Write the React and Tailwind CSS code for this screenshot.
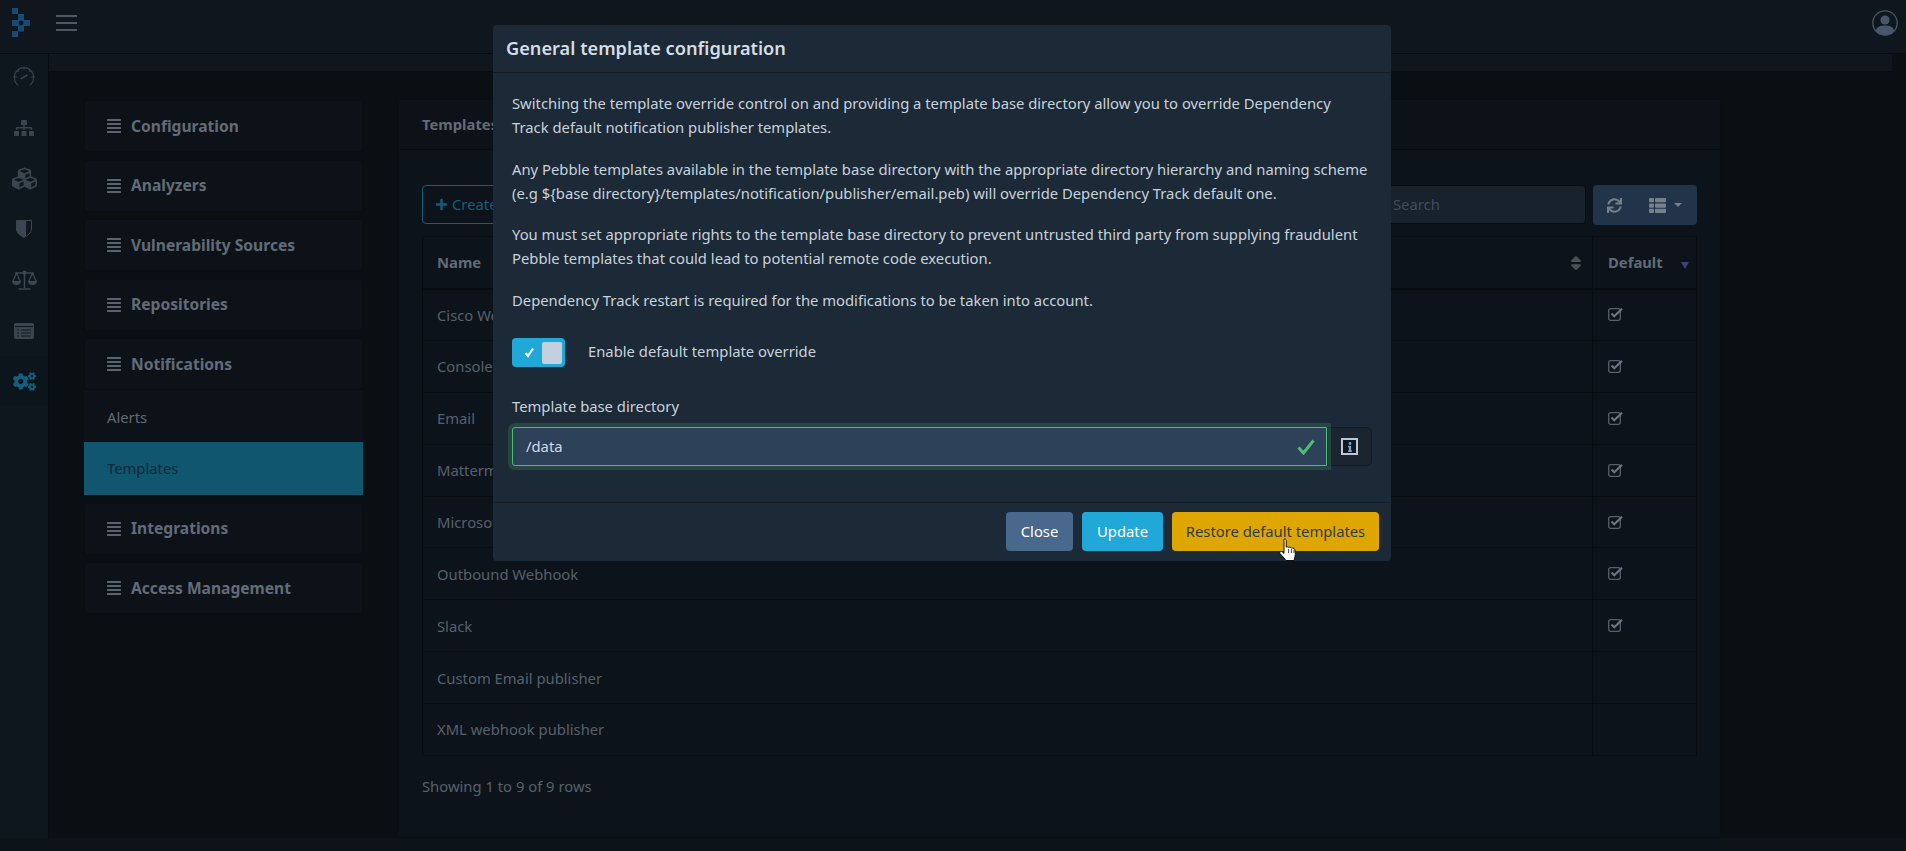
import { FaAlignJustify, FaCogs, FaCubes, FaPlus, FaSitemap, FaSort, FaSync, FaThList, FaInfo } from 'react-icons/fa';

const sideGroupsTop = ['Configuration', 'Analyzers', 'Vulnerability Sources', 'Repositories'];
const sideGroupsBottom = ['Integrations', 'Access Management'];
const templates = [
  ['Cisco WebEx', true],
  ['Console', true],
  ['Email', true],
  ['Mattermost', true],
  ['Microsoft Teams', true],
  ['Outbound Webhook', true],
  ['Slack', true],
  ['Custom Email publisher', false],
  ['XML webhook publisher', false],
];

function Logo() {
  return (
    <svg width="18" height="29" viewBox="0 0 18 29" fill="#174a75" className="block">
      <rect x="0" y="0" width="6" height="6" />
      <rect x="6" y="6" width="6" height="6" />
      <rect x="0" y="12" width="18" height="6" />
      <circle cx="9" cy="15" r="2.4" fill="#0f161d" />
      <rect x="6" y="18" width="6" height="5.5" />
      <rect x="0" y="23" width="6" height="6" />
    </svg>
  );
}

function Gauge() {
  return (
    <svg width="22" height="22" viewBox="0 0 22 22" fill="none" stroke="#36424e" strokeWidth="1.2">
      <path d="M5 19.2A9.8 9.8 0 1 1 17 19.2" />
      <path d="M7.5 13 L14.5 9" strokeWidth="1.6" />
      <path d="M11 1.5v2M2 11h2M18 11h2M4.5 4.5l1.4 1.4M17.5 4.5l-1.4 1.4" />
    </svg>
  );
}

function Shield() {
  return (
    <svg width="16" height="18" viewBox="0 0 16 18">
      <path d="M0.5 0.5H15.5V9C15.5 13 11 16 8 17.5C5 16 0.5 13 0.5 9Z" fill="#10171e" stroke="#3d4753" />
      <path d="M0.5 0.5H10V15.8C9.3 16.3 8.6 17.2 8 17.5C5 16 0.5 13 0.5 9Z" fill="#3d4753" />
    </svg>
  );
}

function ScaleIcon() {
  return (
    <svg width="25" height="20" viewBox="0 0 25 20" fill="none" stroke="#3d4753" strokeWidth="1.2">
      <path d="M12.5 1v17M6.5 19h12M3 3h19" strokeWidth="1.5" />
      <circle cx="12.5" cy="2.5" r="1.5" fill="#3d4753" />
      <path d="M4.5 3 .8 11.5h7.4ZM20.5 3l-3.7 8.5h7.4Z" />
      <path d="M.8 11.5a3.7 2.8 0 0 0 7.4 0ZM16.8 11.5a3.7 2.8 0 0 0 7.4 0Z" fill="#3d4753" />
    </svg>
  );
}

function ListIcon() {
  return (
    <svg width="20" height="16" viewBox="0 0 20 16">
      <rect x="0" y="0" width="20" height="16" rx="2" fill="#3a4550" />
      <path d="M1 3.5h18M3 7h2M7 7h10M3 10h2M7 10h10M3 13h2M7 13h10" stroke="#10171e" strokeWidth="1" />
    </svg>
  );
}

function Avatar() {
  return (
    <svg width="26" height="26" viewBox="0 0 26 26">
      <circle cx="13" cy="13" r="12.2" fill="none" stroke="#48586a" strokeWidth="1.3" />
      <circle cx="13" cy="10" r="4.6" fill="#48586a" />
      <path d="M3.6 20.5C5 16.8 8.5 15.6 13 15.6S21 16.8 22.4 20.5A11.3 11.3 0 0 1 13 25 11.3 11.3 0 0 1 3.6 20.5Z" fill="#48586a" />
    </svg>
  );
}

function CheckSquare() {
  return (
    <svg width="16" height="14" viewBox="0 0 16 14" fill="none" className="block -mt-[1px]">
      <rect x="0.7" y="1.7" width="11.6" height="11.6" rx="2" stroke="#55616d" strokeWidth="1.3" />
      <path d="M3.5 6.5 6.3 9.3 14 1.8" stroke="#6b7682" strokeWidth="2.2" />
    </svg>
  );
}

function HandCursor() {
  return (
    <svg width="18" height="24" viewBox="0 0 18 24" className="absolute left-[1279px] top-[538px]">
      <path
        d="M5 1.2C6 .6 7.2 1.2 7.2 2.4V9.2C7.8 8.6 9.3 8.6 9.9 9.6C10.6 9 12 9.1 12.6 10.2C13.4 9.7 15 10 15.6 11.2C16.4 13 16.5 16 16 18.5L15 22.5H6.8L5.6 20.6L1.2 15.8C.5 15 .7 13.9 1.6 13.6C2.6 13.2 3.6 14 5 15.4V2.4C5 2 5 1.5 5 1.2Z"
        fill="#ffffff"
        stroke="#111111"
        strokeWidth="1"
      />
      <path d="M9.6 11V15M12.4 11V15M15 12V15" stroke="#111111" strokeWidth="0.8" />
    </svg>
  );
}

function SideHeading({ label, mb }) {
  return (
    <div className={`h-[52px] flex items-center pl-[21px] bg-[#0d1219] border border-[#0a0d12] rounded-[3px] ${mb}`}>
      <FaAlignJustify className="w-[16px] h-[16px] text-[#59646f]" />
      <span className="ml-[9px] pt-[1px] font-bold text-[#616c78] text-[15.6px]">{label}</span>
    </div>
  );
}

function TemplatesTable() {
  return (
    <table className="w-full table-fixed border-collapse text-[14.8px] text-[#56616c]">
      <thead>
        <tr className="h-[52px] border border-[#080b0f] border-b-2 text-[#616c78]">
          <th className="text-left font-bold px-[14px] relative">
            Name
            <FaSort className="absolute right-[9px] top-[17px] w-[14px] h-[18px] text-[#4a5157]" />
          </th>
          <th className="w-[104px] text-left font-bold pl-[15px] border-l border-[#080b0f] relative">
            Default
            <span className="absolute right-[7px] top-[25px] w-0 h-0 border-x-[4.5px] border-x-transparent border-t-[7px] border-t-[#3f3f80]" />
          </th>
        </tr>
      </thead>
      <tbody>
        {templates.map(([name, isDefault]) => (
          <tr key={name} className="h-[51.9px] border border-[#080b0f]">
            <td className="px-[14px]">{name}</td>
            <td className="pl-[15px] border-l border-[#080b0f]">{isDefault && <CheckSquare />}</td>
          </tr>
        ))}
      </tbody>
    </table>
  );
}

function TemplateModal() {
  return (
    <div className="absolute left-[493px] top-[25px] w-[898px] h-[536px] bg-[#1c2936] rounded-[4px] text-[#c8d2dc] text-[14.8px] flex flex-col">
      <div className="h-[48px] pl-[13px] flex items-center border-b border-[#141b24]">
        <h5 className="font-semibold text-[18.2px] text-[#d5dde5]">General template configuration</h5>
      </div>
      <div className="flex-1 pt-[18px] px-[19px]">
        <p className="leading-[24px] mb-[17.5px] max-w-[840px]">
          Switching the template override control on and providing a template base directory allow you to override Dependency Track default notification publisher templates.
        </p>
        <p className="leading-[24px] mb-[17.5px]">
          Any Pebble templates available in the template base directory with the appropriate directory hierarchy and naming scheme (e.g {'${base directory}'}/templates/notification/publisher/email.peb) will override Dependency Track default one.
        </p>
        <p className="leading-[24px] mb-[17.5px]">
          You must set appropriate rights to the template base directory to prevent untrusted third party from supplying fraudulent Pebble templates that could lead to potential remote code execution.
        </p>
        <p className="leading-[24px] mb-[26.5px]">Dependency Track restart is required for the modifications to be taken into account.</p>
        <div className="flex items-center mb-[27px]">
          <div className="w-[53px] h-[29px] bg-[#20a8d8] rounded-[4px] flex items-center pl-[12px] pr-[3px] justify-between">
            <svg width="11" height="11" viewBox="0 0 11 11" fill="none">
              <path d="M1.5 6 4 9 9 1.5" stroke="#ffffff" strokeWidth="2.2" />
            </svg>
            <span className="w-[20px] h-[22px] bg-[#c3d0de] rounded-[2px]" />
          </div>
          <span className="ml-[23px] pb-[2px]">Enable default template override</span>
        </div>
        <label className="block leading-[24px] mb-[9px]">Template base directory</label>
        <div className="flex h-[39px]">
          <div className="flex-1 flex items-center justify-between pl-[13px] pr-[11px] bg-[#2d4159] border border-[#4dbd74] rounded-l-[3px] shadow-[0_0_0_4px_rgba(77,189,116,0.2)] relative">
            <span className="text-[#d3dbe4]">/data</span>
            <svg width="18" height="16" viewBox="0 0 18 16" fill="none">
              <path d="M1.5 8.5 6.5 14 16.5 1.5" stroke="#4dbd74" strokeWidth="3" />
            </svg>
          </div>
          <div className="w-[45px] flex items-center justify-center bg-[#1a2530] border border-[#121a22] rounded-r-[5px]">
            <span className="w-[17px] h-[17px] border-2 border-[#b9c7d6] bg-[#10171e] flex items-center justify-center">
              <FaInfo className="w-[10px] h-[10px] text-[#6fa8d8]" />
            </span>
          </div>
        </div>
      </div>
      <div className="h-[59px] border-t border-[#141b24] flex items-start justify-end gap-[9px] pt-[9px] pr-[12px]">
        <button className="h-[39px] w-[67px] rounded-[4px] bg-[#48688c] text-white">Close</button>
        <button className="h-[39px] w-[81px] rounded-[4px] bg-[#20a8d8] text-white">Update</button>
        <button className="h-[39px] w-[207px] rounded-[4px] bg-[#e0a600] text-[#2f3b47]">Restore default templates</button>
      </div>
    </div>
  );
}

export default function App() {
  return (
    <div className="relative w-[1906px] h-[851px] overflow-hidden flex flex-col bg-[#0c1319] font-['Noto_Sans',sans-serif]">
      <header className="h-[54px] shrink-0 pb-[8px] flex items-center justify-between bg-[#0f161d] border-b border-[#080b0f]">
        <div className="flex items-center">
          <div className="ml-[12px]">
            <Logo />
          </div>
          <div className="ml-[26px] flex flex-col gap-[5px] w-[21px]">
            <span className="h-[2px] bg-[#4e5964]" />
            <span className="h-[2px] bg-[#4e5964]" />
            <span className="h-[2px] bg-[#4e5964]" />
          </div>
        </div>
        <div className="mr-[8px]">
          <Avatar />
        </div>
      </header>

      <div className="h-[784px] flex">
        <nav className="w-[49px] shrink-0 bg-[#0f171e] border-r border-[#080b0f] overflow-hidden">
          <div className="-mt-[2px] text-[#3b4550]">
            <div className="h-[50.7px] flex items-center justify-center"><Gauge /></div>
            <div className="h-[50.7px] flex items-center justify-center"><FaSitemap className="w-[20px] h-[20px]" /></div>
            <div className="h-[50.7px] flex items-center justify-center"><FaCubes className="w-[25px] h-[25px]" /></div>
            <div className="h-[50.7px] flex items-center justify-center"><Shield /></div>
            <div className="h-[50.7px] flex items-center justify-center"><ScaleIcon /></div>
            <div className="h-[50.7px] flex items-center justify-center"><ListIcon /></div>
            <div className="h-[50.7px] flex items-center justify-center bg-[#0d151c]"><FaCogs className="w-[23px] h-[23px] text-[#12607c]" /></div>
          </div>
        </nav>

        <main className="flex-1 flex flex-col bg-[#0a0f13] min-w-0">
          <div className="h-[18px] shrink-0 mr-[14px] bg-[#0f161d] border-b border-[#080b0f]" />
          <div className="flex-1 flex pt-[28px]">
            <aside className="w-[279px] ml-[35px] shrink-0">
              {sideGroupsTop.map((label) => (
                <SideHeading key={label} label={label} mb="mb-[7.5px]" />
              ))}
              <SideHeading label="Notifications" mb="mb-0" />
              <div className="bg-[#0d1219] mb-[7.5px]">
                <div className="h-[52px] pt-[2px] flex items-center pl-[23px] text-[14.8px] text-[#616b75]">Alerts</div>
                <div className="h-[53px] flex items-center pl-[23px] text-[14.8px] text-[#0b2b3a] bg-[#10566e]">Templates</div>
              </div>
              {sideGroupsBottom.map((label) => (
                <SideHeading key={label} label={label} mb="mb-[7.5px]" />
              ))}
            </aside>

            <section className="w-[1323px] ml-[35px] -mt-[1px] h-[739px] bg-[#0d131a] border border-[#0a0d12] rounded-[3px] flex flex-col">
              <div className="h-[50px] shrink-0 flex items-center pl-[23px] border-b border-[#080b0f] bg-[#0d1219] font-bold text-[14.8px] text-[#616c78]">
                Templates
              </div>
              <div className="px-[23px] pt-[35px]">
                <div className="h-[40px] flex justify-between mb-[11px]">
                  <button className="h-[39px] px-[12px] flex items-center gap-[4px] border border-[#12607c] rounded-[4px] text-[14.8px] text-[#12607c]">
                    <FaPlus className="w-[13px] h-[13px]" /> Create Template
                  </button>
                  <div className="flex gap-[7px]">
                    <div className="w-[206px] h-[39px] flex items-center pl-[12px] bg-[#18222c] border border-[#080b0f] rounded-[4px] text-[14.8px] text-[#3c4c5c]">Search</div>
                    <div className="w-[104px] h-[40px] flex items-center pl-[14px] bg-[#22344a] rounded-[4px] text-[#76808a]">
                      <FaSync className="w-[15px] h-[15px]" />
                      <FaThList className="ml-[27px] w-[17px] h-[17px]" />
                      <span className="ml-[8px] w-0 h-0 border-x-[4px] border-x-transparent border-t-[4px] border-t-[#76808a]" />
                    </div>
                  </div>
                </div>
                <TemplatesTable />
                <p className="mt-[19px] text-[14.8px] leading-[22px] text-[#56616c]">Showing 1 to 9 of 9 rows</p>
              </div>
            </section>
          </div>
        </main>
      </div>

      <TemplateModal />
      <HandCursor />
    </div>
  );
}
